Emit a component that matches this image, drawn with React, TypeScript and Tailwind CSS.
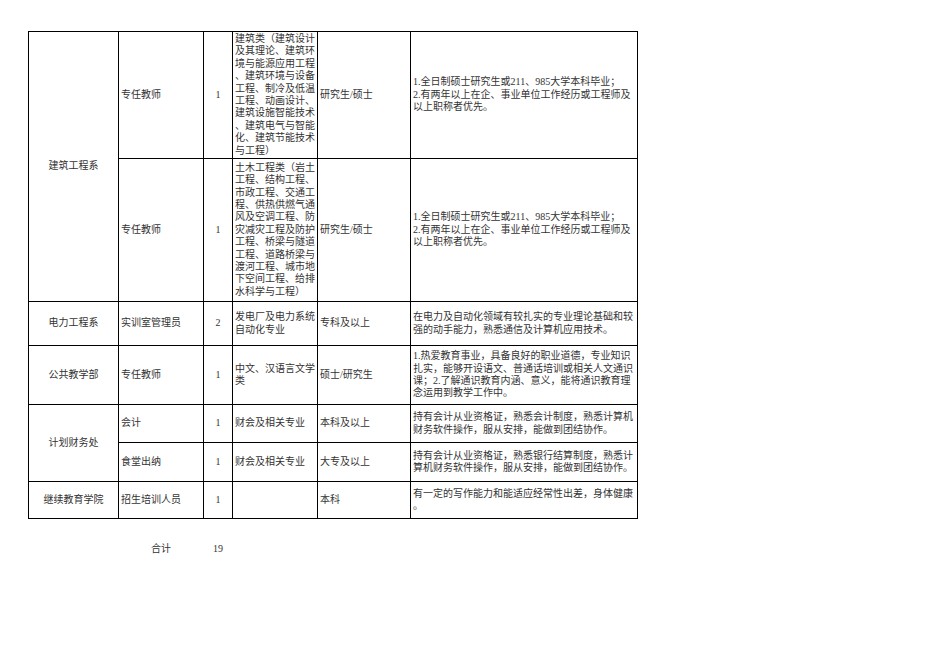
import React from "react";

const font = { fontFamily: '"Liberation Serif", "Noto Sans CJK SC", serif' };

function Lines({ lines }: { lines: string[] }) {
  return (
    <>
      {lines.map((l, i) => (
        <div key={i} className="whitespace-nowrap">
          {l}
        </div>
      ))}
    </>
  );
}

const req1 = [
  "1.全日制硕士研究生或211、985大学本科毕业；",
  "2.有两年以上在企、事业单位工作经历或工程师及",
  "以上职称者优先。",
];

const td = "border border-black px-[2px] align-middle";

export default function App() {
  return (
    <div className="w-[936px] h-[662px] bg-white text-[#333] text-[10px] leading-[12.4px] pt-[31px] pl-[28px]" style={font}>
      <table className="border-collapse table-fixed w-[609px]">
        <colgroup>
          <col className="w-[90px]" />
          <col className="w-[85px]" />
          <col className="w-[29px]" />
          <col className="w-[85px]" />
          <col className="w-[93px]" />
          <col className="w-[227px]" />
        </colgroup>
        <tbody>
          <tr className="h-[127px]">
            <td rowSpan={2} className={`${td} text-center`}>建筑工程系</td>
            <td className={td}>专任教师</td>
            <td className={`${td} text-center`}>1</td>
            <td className={td}>
              <Lines
                lines={[
                  "建筑类（建筑设计",
                  "及其理论、建筑环",
                  "境与能源应用工程",
                  "、建筑环境与设备",
                  "工程、制冷及低温",
                  "工程、动画设计、",
                  "建筑设施智能技术",
                  "、建筑电气与智能",
                  "化、建筑节能技术",
                  "与工程）",
                ]}
              />
            </td>
            <td className={td}>研究生/硕士</td>
            <td className={td}>
              <Lines lines={req1} />
            </td>
          </tr>
          <tr className="h-[143px]">
            <td className={td}>专任教师</td>
            <td className={`${td} text-center`}>1</td>
            <td className={td}>
              <Lines
                lines={[
                  "土木工程类（岩土",
                  "工程、结构工程、",
                  "市政工程、交通工",
                  "程、供热供燃气通",
                  "风及空调工程、防",
                  "灾减灾工程及防护",
                  "工程、桥梁与隧道",
                  "工程、道路桥梁与",
                  "渡河工程、城市地",
                  "下空间工程、给排",
                  "水科学与工程）",
                ]}
              />
            </td>
            <td className={td}>研究生/硕士</td>
            <td className={td}>
              <Lines lines={req1} />
            </td>
          </tr>
          <tr className="h-[44px]">
            <td className={`${td} text-center`}>电力工程系</td>
            <td className={td}>实训室管理员</td>
            <td className={`${td} text-center`}>2</td>
            <td className={td}>
              <Lines lines={["发电厂及电力系统", "自动化专业"]} />
            </td>
            <td className={td}>专科及以上</td>
            <td className={td}>
              <Lines
                lines={[
                  "在电力及自动化领域有较扎实的专业理论基础和较",
                  "强的动手能力，熟悉通信及计算机应用技术。",
                ]}
              />
            </td>
          </tr>
          <tr className="h-[59px]">
            <td className={`${td} text-center`}>公共教学部</td>
            <td className={td}>专任教师</td>
            <td className={`${td} text-center`}>1</td>
            <td className={td}>
              <Lines lines={["中文、汉语言文学", "类"]} />
            </td>
            <td className={td}>硕士/研究生</td>
            <td className={td}>
              <Lines
                lines={[
                  "1.热爱教育事业，具备良好的职业道德，专业知识",
                  "扎实，能够开设语文、普通话培训或相关人文通识",
                  "课；2.了解通识教育内涵、意义，能将通识教育理",
                  "念运用到教学工作中。",
                ]}
              />
            </td>
          </tr>
          <tr className="h-[38px]">
            <td rowSpan={2} className={`${td} text-center`}>计划财务处</td>
            <td className={td}>会计</td>
            <td className={`${td} text-center`}>1</td>
            <td className={td}>财会及相关专业</td>
            <td className={td}>本科及以上</td>
            <td className={td}>
              <Lines
                lines={[
                  "持有会计从业资格证，熟悉会计制度，熟悉计算机",
                  "财务软件操作，服从安排，能做到团结协作。",
                ]}
              />
            </td>
          </tr>
          <tr className="h-[39px]">
            <td className={td}>食堂出纳</td>
            <td className={`${td} text-center`}>1</td>
            <td className={td}>财会及相关专业</td>
            <td className={td}>大专及以上</td>
            <td className={td}>
              <Lines
                lines={[
                  "持有会计从业资格证，熟悉银行结算制度，熟悉计",
                  "算机财务软件操作，服从安排，能做到团结协作。",
                ]}
              />
            </td>
          </tr>
          <tr className="h-[37px]">
            <td className={`${td} text-center`}>继续教育学院</td>
            <td className={td}>招生培训人员</td>
            <td className={`${td} text-center`}>1</td>
            <td className={td}></td>
            <td className={td}>本科</td>
            <td className={td}>
              <Lines lines={["有一定的写作能力和能适应经常性出差，身体健康", "。"]} />
            </td>
          </tr>
          <tr className="h-[21px]">
            <td colSpan={6}></td>
          </tr>
          <tr className="h-[20px]">
            <td></td>
            <td className="text-center align-middle">合计</td>
            <td className="text-center align-middle">19</td>
            <td colSpan={3}></td>
          </tr>
        </tbody>
      </table>
    </div>
  );
}
